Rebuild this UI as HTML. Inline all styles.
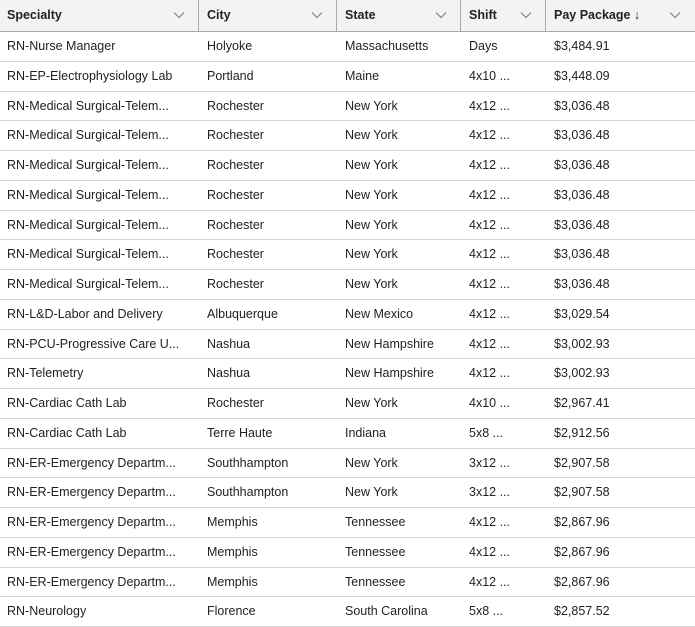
<!DOCTYPE html>
<html><head><meta charset="utf-8"><style>
*{margin:0;padding:0;box-sizing:border-box}
body{width:695px;height:626px;overflow:hidden;background:#fff;font-family:"Segoe UI","Liberation Sans",sans-serif;font-size:12.5px;color:#222;position:relative}
.hdr{position:absolute;left:0;top:0;width:695px;height:32px;background:#f3f3f3;border-bottom:1px solid #a9a9a9}
.h{position:absolute;top:0;height:31px;line-height:31px;font-weight:bold;color:#222}
.dv{position:absolute;top:0;width:1px;height:31px;background:#a9a9a9}
.ch{position:absolute;top:11px}
.r{position:absolute;left:0;width:695px;height:29.75px;border-bottom:1px solid #d6d6d6}
.c{position:absolute;top:0;line-height:29px;white-space:nowrap}
</style></head><body>
<div class="hdr">
<div class="h" style="left:7px">Specialty</div>
<div class="h" style="left:207px">City</div>
<div class="h" style="left:345px">State</div>
<div class="h" style="left:469px">Shift</div>
<div class="h" style="left:554px">Pay Package <span style="font-weight:normal">↓</span></div>
<div class="dv" style="left:198px"></div><div class="dv" style="left:336px"></div><div class="dv" style="left:460px"></div><div class="dv" style="left:545px"></div>
<svg class="ch" style="left:173px" width="12" height="8"><path d="M1 1.5l5 5 5-5" stroke="#777" fill="none"/></svg>
<svg class="ch" style="left:311px" width="12" height="8"><path d="M1 1.5l5 5 5-5" stroke="#777" fill="none"/></svg>
<svg class="ch" style="left:435px" width="12" height="8"><path d="M1 1.5l5 5 5-5" stroke="#777" fill="none"/></svg>
<svg class="ch" style="left:520px" width="12" height="8"><path d="M1 1.5l5 5 5-5" stroke="#777" fill="none"/></svg>
<svg class="ch" style="left:669px" width="12" height="8"><path d="M1 1.5l5 5 5-5" stroke="#777" fill="none"/></svg>
</div>
<div id="rows"></div>
<script>
var d=[["RN-Nurse Manager","Holyoke","Massachusetts","Days","$3,484.91"],
["RN-EP-Electrophysiology Lab","Portland","Maine","4x10 ...","$3,448.09"],
["RN-Medical Surgical-Telem...","Rochester","New York","4x12 ...","$3,036.48"],
["RN-Medical Surgical-Telem...","Rochester","New York","4x12 ...","$3,036.48"],
["RN-Medical Surgical-Telem...","Rochester","New York","4x12 ...","$3,036.48"],
["RN-Medical Surgical-Telem...","Rochester","New York","4x12 ...","$3,036.48"],
["RN-Medical Surgical-Telem...","Rochester","New York","4x12 ...","$3,036.48"],
["RN-Medical Surgical-Telem...","Rochester","New York","4x12 ...","$3,036.48"],
["RN-Medical Surgical-Telem...","Rochester","New York","4x12 ...","$3,036.48"],
["RN-L&D-Labor and Delivery","Albuquerque","New Mexico","4x12 ...","$3,029.54"],
["RN-PCU-Progressive Care U...","Nashua","New Hampshire","4x12 ...","$3,002.93"],
["RN-Telemetry","Nashua","New Hampshire","4x12 ...","$3,002.93"],
["RN-Cardiac Cath Lab","Rochester","New York","4x10 ...","$2,967.41"],
["RN-Cardiac Cath Lab","Terre Haute","Indiana","5x8 ...","$2,912.56"],
["RN-ER-Emergency Departm...","Southhampton","New York","3x12 ...","$2,907.58"],
["RN-ER-Emergency Departm...","Southhampton","New York","3x12 ...","$2,907.58"],
["RN-ER-Emergency Departm...","Memphis","Tennessee","4x12 ...","$2,867.96"],
["RN-ER-Emergency Departm...","Memphis","Tennessee","4x12 ...","$2,867.96"],
["RN-ER-Emergency Departm...","Memphis","Tennessee","4x12 ...","$2,867.96"],
["RN-Neurology","Florence","South Carolina","5x8 ...","$2,857.52"]];
var x=[7,207,345,469,554],h="";
d.forEach(function(r,i){h+='<div class="r" style="top:'+(32+i*29.75)+'px">';r.forEach(function(t,j){h+='<div class="c" style="left:'+x[j]+'px">'+t.replace(/&/g,"&amp;")+'</div>'});h+='</div>'});
document.getElementById("rows").innerHTML=h;
</script>
</body></html>
